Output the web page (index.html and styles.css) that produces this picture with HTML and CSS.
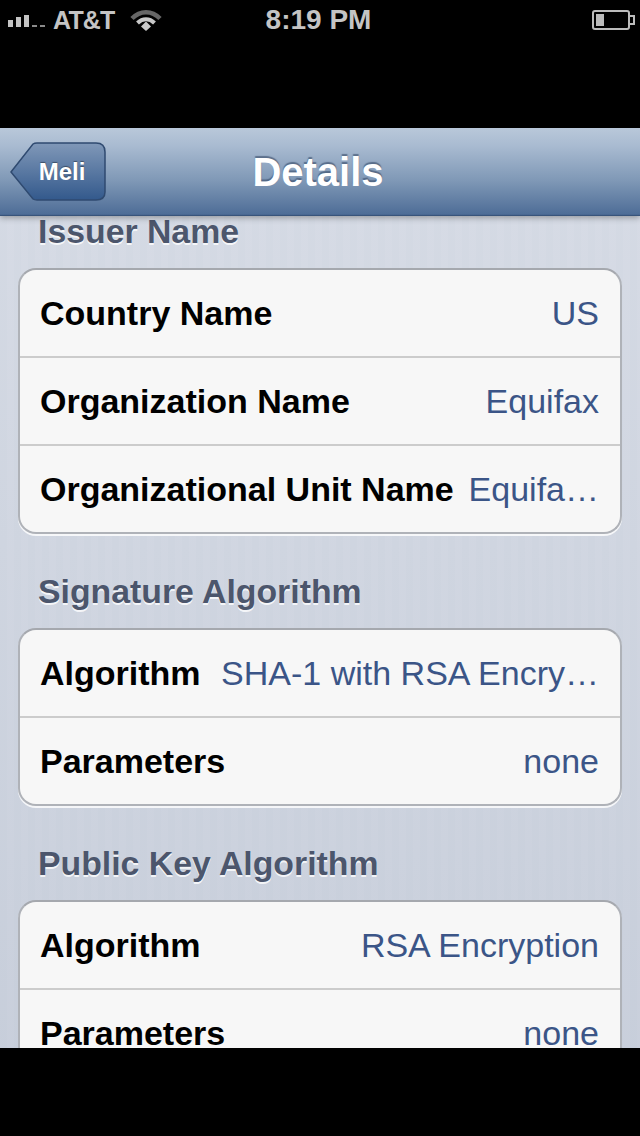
FILE: index.html
```html
<!DOCTYPE html>
<html lang="en">
<head>
<meta charset="utf-8">
<title>Details</title>
<link rel="stylesheet" href="styles.css">
</head>
<body>
<div class="status">
  <div class="status-left">
    <svg class="signal" width="44" height="14" viewBox="0 0 44 14"><rect x="0" y="6" width="5" height="7" fill="#c4c4c4"/><rect x="8" y="3" width="5" height="10" fill="#c4c4c4"/><rect x="16" y="1" width="5" height="12" fill="#c4c4c4"/><rect x="24" y="11" width="5" height="2" fill="#8a8a8a"/><rect x="32" y="11" width="5" height="2" fill="#8a8a8a"/></svg>
    <span class="carrier">AT&amp;T</span>
    <svg class="wifi" width="32" height="22" viewBox="0 0 32 22"><path d="M2 9.5C10 1 22 1 30 9.5" fill="none" stroke="#666" stroke-width="4.5"/><path d="M7.5 14C12.5 9 19.5 9 24.5 14" fill="none" stroke="#c8c8c8" stroke-width="4"/><path d="M11 17.5L16 12.5L21 17.5L16 22Z" fill="#c8c8c8"/></svg>
  </div>
  <span class="clock">8:19 PM</span>
  <svg class="battery" width="44" height="20" viewBox="0 0 44 20"><rect x="1" y="1" width="36" height="18" rx="2" fill="none" stroke="#bbb" stroke-width="2"/><rect x="4" y="4" width="8" height="12" fill="#bbb"/><path d="M38 6H42V14H38" fill="none" stroke="#bbb" stroke-width="2"/></svg>
</div>
<div class="gap"></div>
<main class="app">
  <header class="nav">
    <div class="back">
      <svg class="back-shape" width="98" height="60" viewBox="0 0 98 60"><defs><linearGradient id="bk" x1="0" y1="0" x2="0" y2="1"><stop offset="0" stop-color="#8098b8"/><stop offset="1" stop-color="#33598c"/></linearGradient></defs><path d="M1 30L23 2Q24.500 1 27 1H86Q95 1 95 10V50Q95 58 86 58H27Q24.500 58 23 57Z" fill="url(#bk)" stroke="#2f4a70" stroke-width="1.500"/></svg>
      <span class="back-label">Meli</span>
    </div>
    <h1 class="title">Details</h1>
  </header>
  <div class="content">
    <section class="group first">
      <h2 class="group-title">Issuer Name</h2>
      <div class="card">
        <div class="row"><span class="key">Country Name</span><span class="val">US</span></div>
        <div class="row"><span class="key">Organization Name</span><span class="val">Equifax</span></div>
        <div class="row"><span class="key">Organizational Unit Name</span><span class="val">Equifa…</span></div>
      </div>
    </section>
    <section class="group">
      <h2 class="group-title">Signature Algorithm</h2>
      <div class="card">
        <div class="row"><span class="key">Algorithm</span><span class="val">SHA-1 with RSA Encry…</span></div>
        <div class="row"><span class="key">Parameters</span><span class="val">none</span></div>
      </div>
    </section>
    <section class="group">
      <h2 class="group-title">Public Key Algorithm</h2>
      <div class="card">
        <div class="row"><span class="key">Algorithm</span><span class="val">RSA Encryption</span></div>
        <div class="row"><span class="key">Parameters</span><span class="val">none</span></div>
      </div>
    </section>
  </div>
</main>
</body>
</html>
```
FILE: styles.css
```css
* { box-sizing: border-box; }
html, body { margin: 0; padding: 0; }
body {
  width: 640px;
  height: 1136px;
  overflow: hidden;
  background: #000;
  font-family: "Liberation Sans", Arial, sans-serif;
}
.status {
  height: 40px;
  display: flex;
  align-items: center;
  justify-content: space-between;
  position: relative;
  padding: 0 4px 0 8px;
  color: #c4c4c4;
}
.status-left { display: flex; align-items: center; }
.signal { margin-top: 2px; }
.carrier { font-size: 25px; font-weight: 700; margin-left: 1px; letter-spacing: -0.8px; }
.wifi { margin-left: 15px; }
.clock {
  position: absolute;
  left: 0;
  right: 3px;
  text-align: center;
  font-size: 28px;
  font-weight: 700;
}
.gap { height: 88px; }
.app {
  height: 920px;
  overflow: hidden;
  position: relative;
  background:
    linear-gradient(rgba(225, 229, 237, .35), rgba(190, 198, 212, .45)),
    repeating-linear-gradient(90deg, #cfd5e0 0, #cfd5e0 7px, #d2d7e2 7px, #d2d7e2 14px);
}
.nav {
  height: 88px;
  display: flex;
  align-items: center;
  justify-content: center;
  position: relative;
  z-index: 1;
  padding-right: 4px;
  background: linear-gradient(#b9c8da 0, #a9bbd1 20%, #7f98b6 60%, #4e6d97 98%, #2f4a70 100%);
  box-shadow: 0 2px 6px rgba(0, 0, 0, .3);
}
.back {
  position: absolute;
  left: 10px;
  top: 14px;
  width: 98px;
  height: 60px;
  display: flex;
  align-items: center;
  justify-content: center;
}
.back-shape { position: absolute; left: 0; top: 0; }
.back-label {
  position: relative;
  margin-left: 6px;
  font-size: 24px;
  font-weight: 700;
  color: #fff;
  text-shadow: 0 -1px 1px rgba(0, 0, 0, .4);
}
.title {
  margin: 0;
  font-size: 40px;
  font-weight: 700;
  color: #fff;
  text-shadow: 0 -2px 1px rgba(50, 70, 100, .6);
}
.group { padding: 0 18px 0 18px; }
.group-title {
  margin: 0;
  height: 94px;
  line-height: 40px;
  padding: 37px 0 0 20px;
  font-size: 33.800px;
  font-weight: 700;
  color: #4c566c;
  text-shadow: 0 2px 0 rgba(255, 255, 255, .8);
  white-space: nowrap;
}
.first .group-title { height: 52px; padding-top: 0; line-height: 30px; }
.card {
  background: #f7f7f7;
  border: 2px solid #afb2b8;
  border-top-color: #a5a8ae;
  border-radius: 18px;
  box-shadow: 0 2px 0 rgba(255, 255, 255, .8);
  overflow: hidden;
}
.row {
  height: 88px;
  display: flex;
  align-items: center;
  justify-content: space-between;
  padding: 0 21px 0 20px;
  border-top: 2px solid #cccccc;
  white-space: nowrap;
}
.row:first-child { border-top: 0; height: 86px; }
.key { font-size: 34px; font-weight: 700; color: #000; }
.val { font-size: 34px; color: #3b5587; }
```
